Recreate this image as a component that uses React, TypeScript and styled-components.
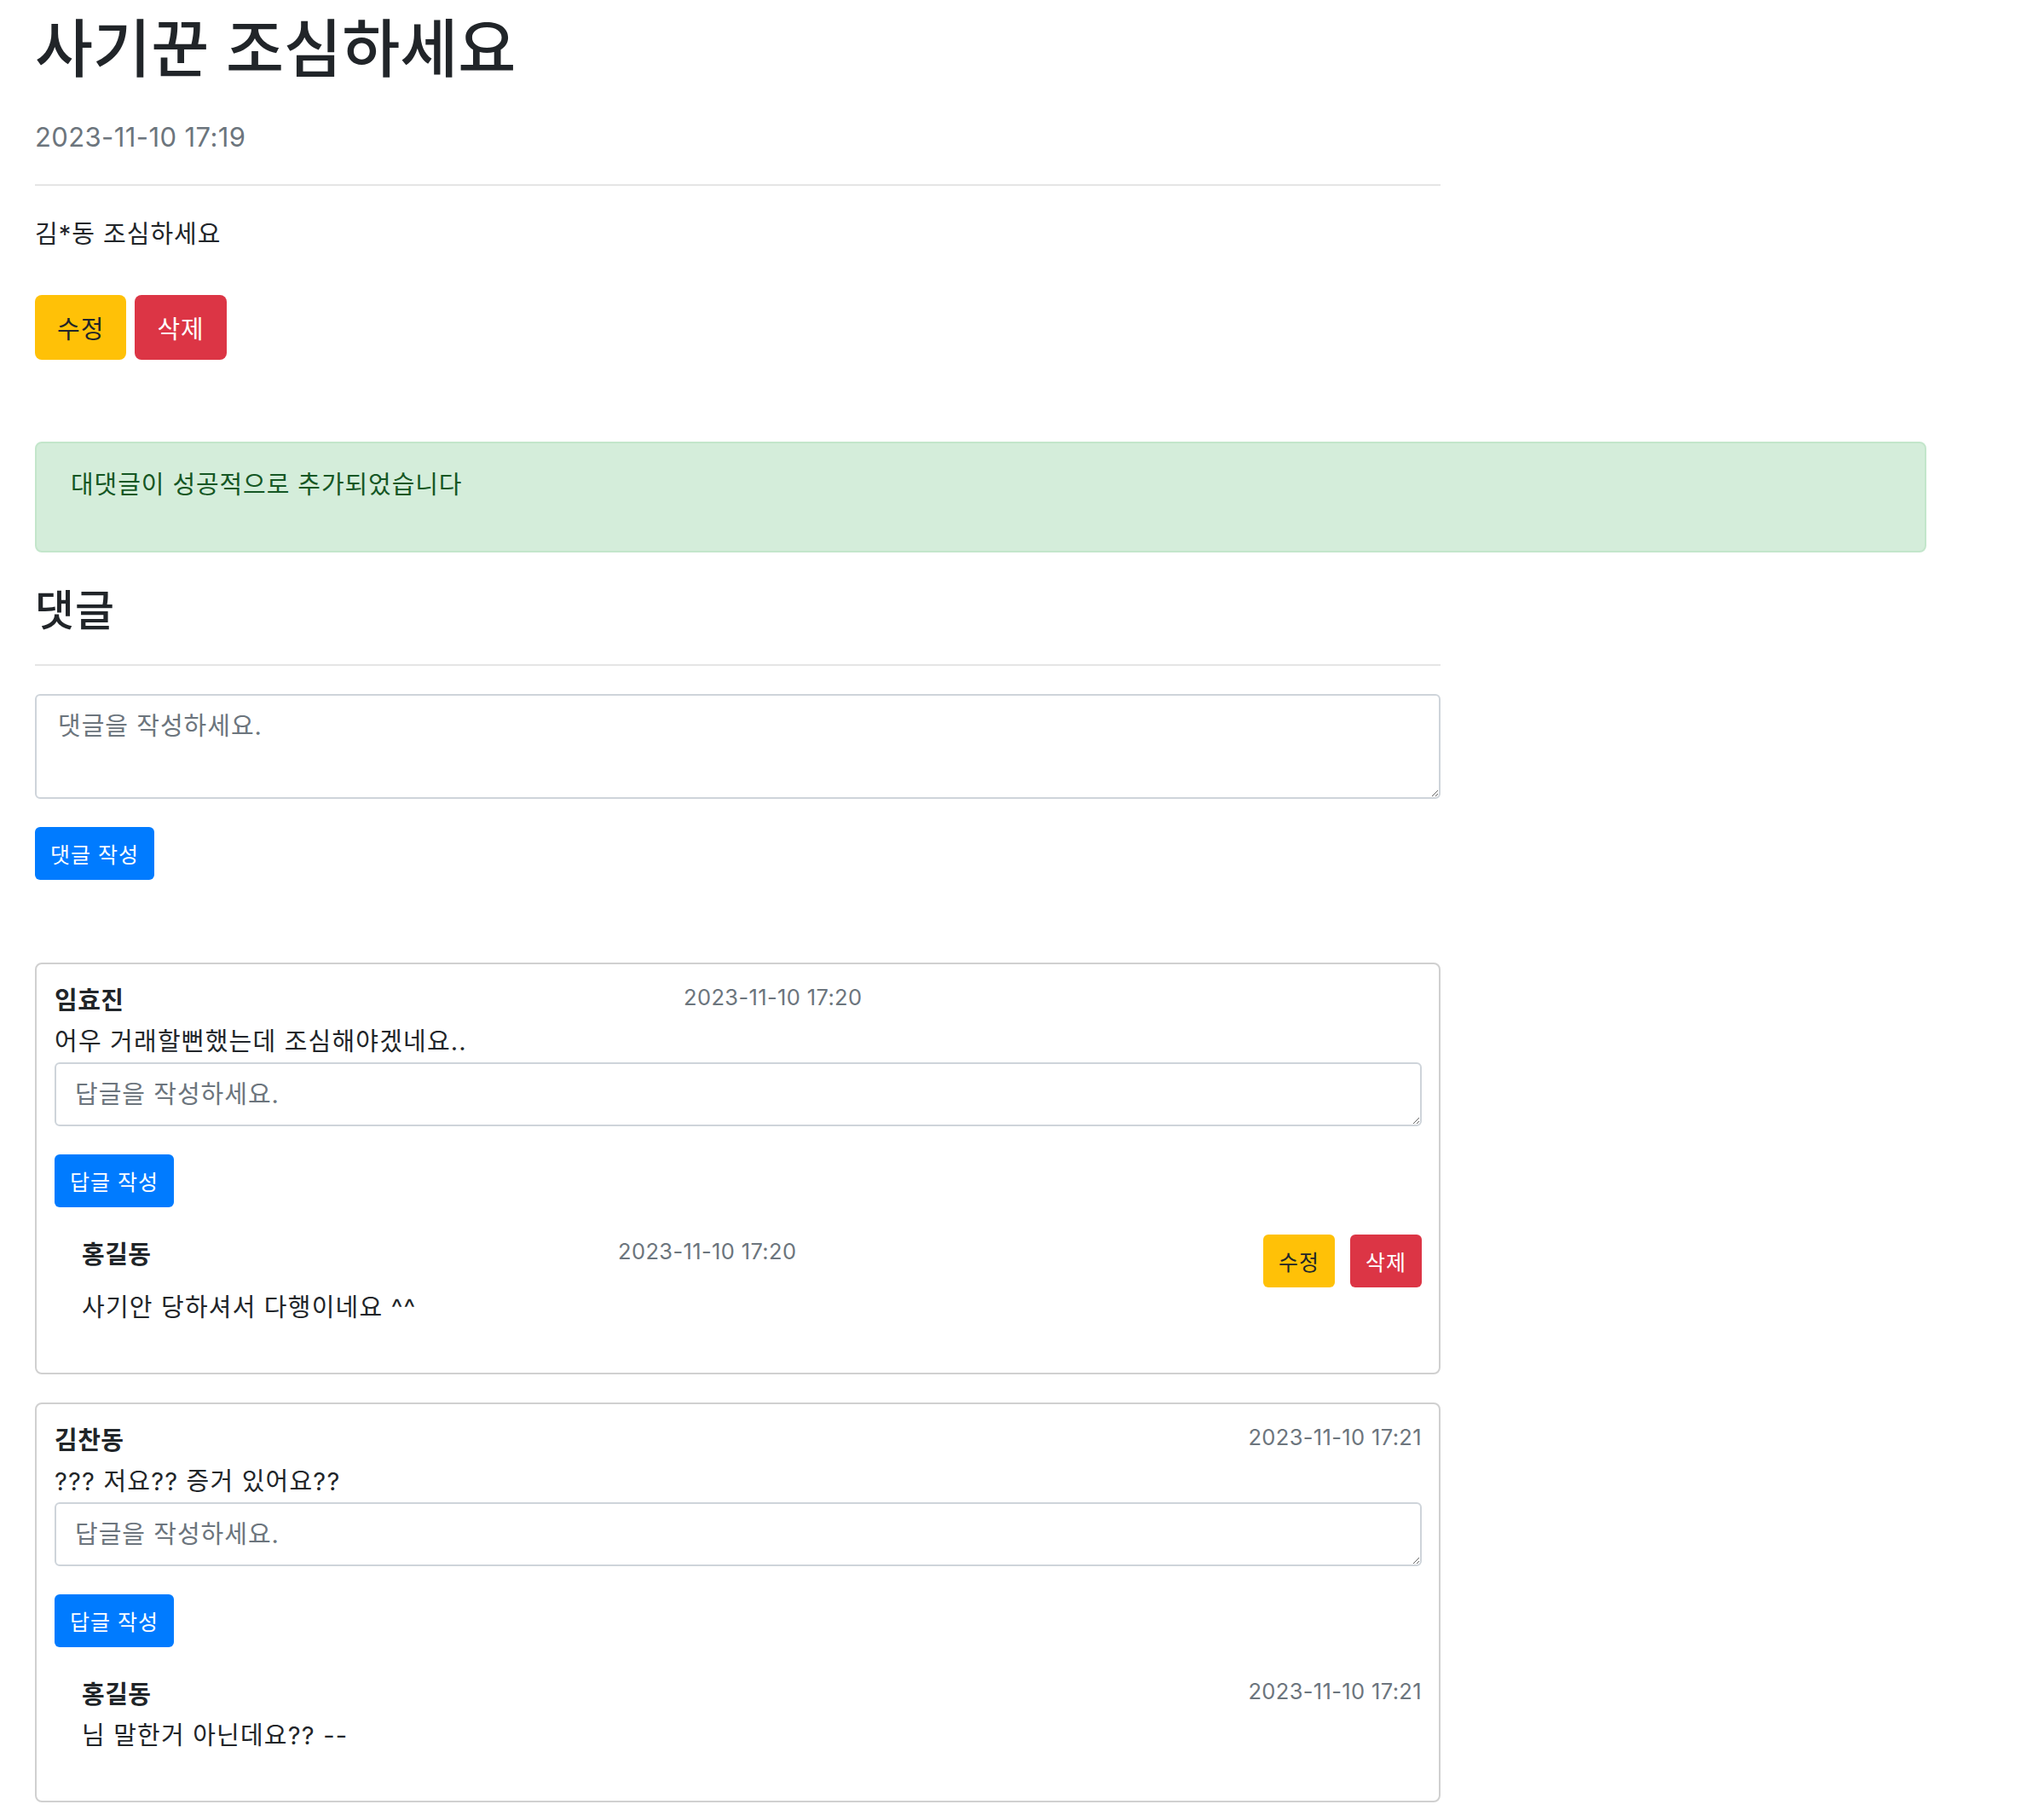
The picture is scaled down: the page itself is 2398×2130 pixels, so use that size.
import React from 'react';
import styled, {createGlobalStyle} from 'styled-components';

type ReplyType = {
    id: number
    author: string
    date: string
    text: string
    editable: boolean
}

type CommentType = {
    id: number
    author: string
    date: string
    text: string
    actionSlot: boolean
    replies: ReplyType[]
}

const comments: CommentType[] = [
    {
        id: 1,
        author: '임효진',
        date: '2023-11-10 17:20',
        text: '어우 거래할뻔했는데 조심해야겠네요..',
        actionSlot: true,
        replies: [
            {id: 11, author: '홍길동', date: '2023-11-10 17:20', text: '사기안 당하셔서 다행이네요 ^^', editable: true},
        ],
    },
    {
        id: 2,
        author: '김찬동',
        date: '2023-11-10 17:21',
        text: '??? 저요?? 증거 있어요??',
        actionSlot: false,
        replies: [
            {id: 21, author: '홍길동', date: '2023-11-10 17:21', text: '님 말한거 아닌데요?? --', editable: false},
        ],
    },
]

const App = () => {
    return (
        <>
            <GlobalStyle/>
            <Page>
                <Column>
                    <Title>사기꾼 조심하세요</Title>
                    <PostDate>2023-11-10 17:19</PostDate>
                    <Divider/>
                    <PostBody>김*동 조심하세요</PostBody>
                    <ActionRow>
                        <Btn tone="warning" size="lg">수정</Btn>
                        <Btn tone="danger" size="lg">삭제</Btn>
                    </ActionRow>
                </Column>

                <Alert>대댓글이 성공적으로 추가되었습니다</Alert>

                <Column>
                    <SectionTitle>댓글</SectionTitle>
                    <Divider/>
                    <CommentInput placeholder="댓글을 작성하세요."/>
                    <SubmitRow>
                        <Btn tone="primary" size="md">댓글 작성</Btn>
                    </SubmitRow>

                    <CommentList>
                        {comments.map((c) => (
                            <Card key={c.id}>
                                <Header>
                                    <Author>{c.author}</Author>
                                    <Stamp>{c.date}</Stamp>
                                    {c.actionSlot && <Actions/>}
                                </Header>
                                <CommentText>{c.text}</CommentText>
                                <ReplyInput placeholder="답글을 작성하세요."/>
                                <SubmitRow>
                                    <Btn tone="primary" size="md">답글 작성</Btn>
                                </SubmitRow>
                                {c.replies.map((r) => (
                                    <Reply key={r.id}>
                                        <Header>
                                            <Author>{r.author}</Author>
                                            <Stamp>{r.date}</Stamp>
                                            {r.editable && (
                                                <Actions>
                                                    <Btn tone="warning" size="md">수정</Btn>
                                                    <Btn tone="danger" size="md">삭제</Btn>
                                                </Actions>
                                            )}
                                        </Header>
                                        <CommentText>{r.text}</CommentText>
                                    </Reply>
                                ))}
                            </Card>
                        ))}
                    </CommentList>
                </Column>
            </Page>
        </>
    );
};

export default App;

const GlobalStyle = createGlobalStyle`
  body {
    margin: 0;
    background: #fff;
    color: #212529;
    font-family: Inter, "Noto Sans CJK KR", sans-serif;
  }
  button, textarea {
    font-family: inherit;
  }
`

const Page = styled.div`
  padding: 0 41px 17px;
`

const Column = styled.div`
  width: 1649px;
`

const Title = styled.h1`
  margin: 12px 0 0;
  font-size: 74px;
  line-height: 90px;
  font-weight: 500;
`

const PostDate = styled.div`
  margin-top: 37px;
  font-size: 31px;
  line-height: 44px;
  letter-spacing: 0.4px;
  color: #6c757d;
`

const Divider = styled.hr`
  margin: 33px 0 0;
  height: 0;
  border: 0;
  border-top: 2px solid #e5e5e5;
`

const PostBody = styled.p`
  margin: 33px 0 0;
  font-size: 29px;
  line-height: 48px;
  letter-spacing: 1px;
`

const ActionRow = styled.div`
  display: flex;
  gap: 10px;
  margin-top: 47px;
`

const tones = {
    warning: {bg: '#ffc107', fg: '#212529'},
    danger: {bg: '#dc3545', fg: '#fff'},
    primary: {bg: '#007bff', fg: '#fff'},
}

const Btn = styled.button<{tone: 'warning' | 'danger' | 'primary', size: 'lg' | 'md'}>`
  display: inline-flex;
  align-items: center;
  justify-content: center;
  border: 0;
  margin: 0;
  cursor: pointer;
  white-space: nowrap;
  background: ${p => tones[p.tone].bg};
  color: ${p => tones[p.tone].fg};
  height: ${p => p.size === 'lg' ? '76px' : '62px'};
  padding: ${p => p.size === 'lg' ? '0 26px' : '0 18px'};
  font-size: ${p => p.size === 'lg' ? '29px' : '25px'};
  letter-spacing: 1px;
  border-radius: ${p => p.size === 'lg' ? '8px' : '6px'};
`

const Alert = styled.div`
  margin-top: 96px;
  width: 2219px;
  box-sizing: border-box;
  padding: 25px 40px 53px;
  background: #d4edda;
  border: 2px solid #c3e6cb;
  border-radius: 8px;
  color: #155724;
  font-size: 29px;
  line-height: 48px;
  letter-spacing: 0.9px;
`

const SectionTitle = styled.h2`
  margin: 38px 0 0;
  font-size: 50px;
  line-height: 60px;
  font-weight: 500;
  letter-spacing: 1px;
`

const CommentInput = styled.textarea`
  display: block;
  margin-top: 33px;
  width: 100%;
  height: 123px;
  box-sizing: border-box;
  padding: 12px 25px;
  border: 2px solid #ced4da;
  border-radius: 6px;
  font-size: 29px;
  line-height: 48px;
  letter-spacing: 1px;
  color: #495057;
  resize: vertical;

  &::placeholder {
    color: #6c757d;
  }
`

const SubmitRow = styled.div`
  display: flex;
  margin-top: 33px;
`

const CommentList = styled.div`
  display: flex;
  flex-direction: column;
  gap: 33px;
  margin-top: 97px;
`

const Card = styled.div`
  border: 2px solid #d0d0d0;
  border-radius: 8px;
  padding: 19px 20px 22px 21px;
`

const Header = styled.div`
  display: flex;
  justify-content: space-between;
  align-items: flex-start;
`

const Author = styled.strong`
  font-size: 29px;
  line-height: 48px;
  letter-spacing: 0.5px;
  font-weight: 700;
`

const Stamp = styled.span`
  font-size: 25.5px;
  line-height: 40px;
  letter-spacing: 0.35px;
  color: #6c757d;
`

const Actions = styled.div`
  display: flex;
  gap: 18px;
`

const CommentText = styled.p`
  margin: 0;
  font-size: 29px;
  line-height: 48px;
  letter-spacing: 1.2px;
`

const ReplyInput = styled(CommentInput)`
  margin-top: 0;
  height: 75px;
  padding: 11.5px 22px;
`

const Reply = styled.div`
  margin: 32px 0 30px 32px;
`
